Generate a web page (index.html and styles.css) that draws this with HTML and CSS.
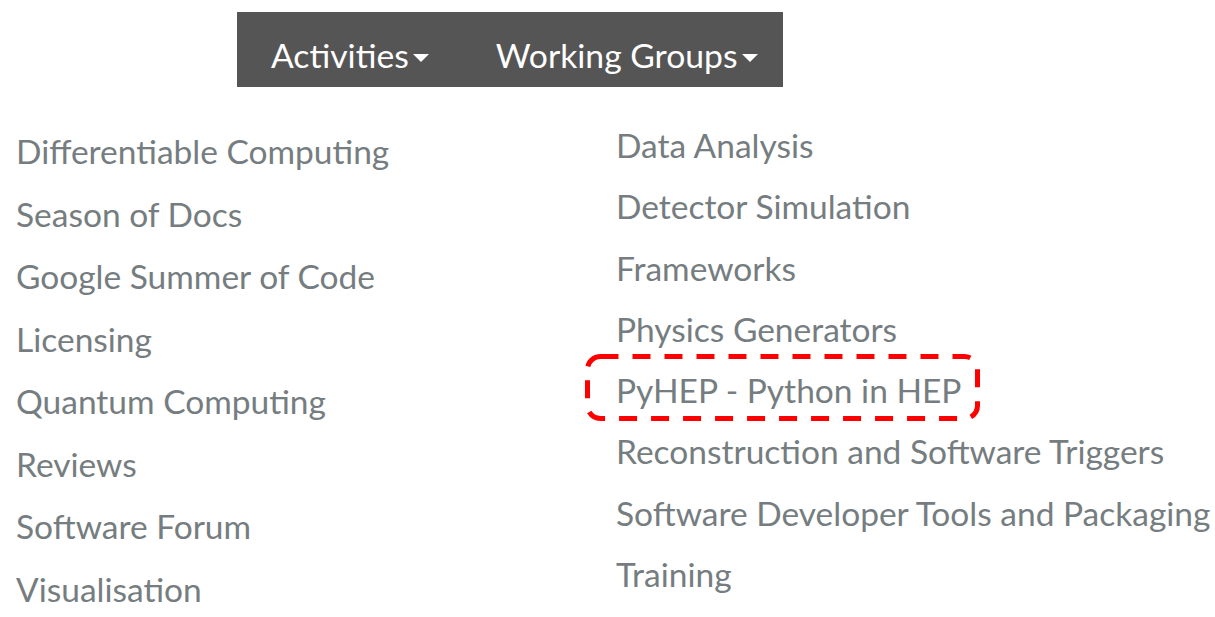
FILE: index.html
```html
<!DOCTYPE html>
<html>
<head>
<meta charset="utf-8">
<link rel="stylesheet" href="styles.css">
</head>
<body>
<div class="page">
  <div class="navwrap">
    <nav class="navbar">
      <span class="navitem">Activities<span class="caret"></span></span>
      <span class="navitem">Working Groups<span class="caret"></span></span>
    </nav>
  </div>
  <div class="menus">
    <ul class="col left">
      <li>Differentiable Computing</li>
      <li>Season of Docs</li>
      <li>Google Summer of Code</li>
      <li>Licensing</li>
      <li>Quantum Computing</li>
      <li>Reviews</li>
      <li>Software Forum</li>
      <li>Visualisation</li>
    </ul>
    <ul class="col right">
      <li>Data Analysis</li>
      <li>Detector Simulation</li>
      <li>Frameworks</li>
      <li>Physics Generators</li>
      <li class="highlight">PyHEP - Python in HEP<svg class="box" width="395" height="67" viewBox="0 0 395 67"><rect x="2.5" y="2.5" width="390" height="62" rx="13" ry="13" fill="none" stroke="#ff0000" stroke-width="5" stroke-dasharray="18 14"/></svg></li>
      <li>Reconstruction and Software Triggers</li>
      <li>Software Developer Tools and Packaging</li>
      <li>Training</li>
    </ul>
  </div>
</div>
</body>
</html>
```
FILE: styles.css
```css
html, body { margin: 0; padding: 0; background: #fff; }
body { font-family: Lato, "Liberation Sans", sans-serif; }
.page { width: 1215px; height: 617px; overflow: hidden; }
.navwrap { padding-top: 12px; padding-left: 237px; }
.navbar {
  background: #555555;
  width: 546px;
  height: 75px;
  display: flex;
  align-items: center;
  padding-left: 34px;
  padding-top: 11px;
  box-sizing: border-box;
  gap: 67px;
}
.navitem { color: #fff; font-size: 33.7px; display: flex; align-items: center; }
.caret {
  display: inline-block;
  width: 0; height: 0;
  border-left: 8.5px solid transparent;
  border-right: 8.5px solid transparent;
  border-top: 8px solid #fff;
  margin-left: 4px;
  margin-top: 6px;
}
.menus { display: flex; }
.col { list-style: none; margin: 0; padding: 0; color: #757d80; font-size: 33.5px; }
.col li { line-height: 62.5px; height: 62.5px; white-space: nowrap; }
.left { width: 616px; padding-left: 16px; padding-top: 33px; box-sizing: border-box; flex: none; }
.right { padding-top: 28px; }
.right li { height: 61.3px; line-height: 61.3px; }
.highlight { position: relative; }
.box { position: absolute; left: -31px; top: -6px; }
```
